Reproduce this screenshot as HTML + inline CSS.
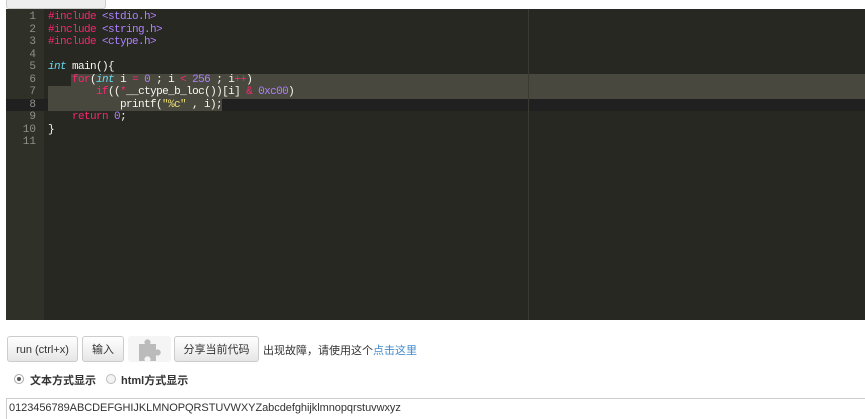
<!DOCTYPE html>
<html><head><meta charset="utf-8"><style>
body{margin:0;width:865px;height:416px;background:#fff;position:relative;overflow:hidden;font-family:"Liberation Sans","Noto Sans CJK SC",sans-serif}
.tab{position:absolute;left:6px;top:-4px;width:98px;height:11px;background:#eee;border:1px solid #ccc;border-radius:3px}
.ed{position:absolute;left:6px;top:9px;width:859px;height:311px;background:#272822;overflow:hidden}
.gut{position:absolute;left:0;top:0;width:38px;height:311px;background:#2f3129}
.ln{position:absolute;left:0;width:30px;text-align:right;color:#8f908a;font:11px/12.5px "Liberation Mono",monospace}
.cl{position:absolute;left:42px;white-space:pre;color:#f8f8f2;font:11px/12.5px "Liberation Mono",monospace;letter-spacing:-0.6px}
.sel{position:absolute;background:#49483e}
.pm{position:absolute;left:522px;top:0;width:1px;height:311px;background:#3b3a32}
.k{color:#f92672}.t{color:#66d9ef;font-style:italic}.n{color:#ae81ff}.s{color:#e6db74}
.btn{position:absolute;top:336px;height:26px;border:1px solid #ccc;border-radius:3px;background:linear-gradient(#fff,#e6e6e6);font-size:11px;line-height:26px;text-align:center;color:#333;box-sizing:border-box}
</style></head><body>
<div class="tab"></div>
<div class="ed">
<div class="gut"></div>
<div class="sel" style="left:0;top:89.5px;width:859px;height:12.5px;background:#202020"></div>
<div class="sel" style="left:65px;top:64.5px;width:794px;height:12.5px"></div>
<div class="sel" style="left:42px;top:77px;width:817px;height:12.5px"></div>
<div class="sel" style="left:42px;top:89.5px;width:174px;height:12.5px"></div>
<div class="pm"></div>
<div class="ln" style="top:2px">1<br>2<br>3<br>4<br>5<br>6<br>7<br>8<br>9<br>10<br>11</div>
<div class="cl" style="top:2px"><span class="k">#include</span> <span class="n">&lt;stdio.h&gt;</span>
<span class="k">#include</span> <span class="n">&lt;string.h&gt;</span>
<span class="k">#include</span> <span class="n">&lt;ctype.h&gt;</span>

<span class="t">int</span> main(){
    <span class="k">for</span>(<span class="t">int</span> i <span class="k">=</span> <span class="n">0</span> ; i <span class="k">&lt;</span> <span class="n">256</span> ; i<span class="k">++</span>)
        <span class="k">if</span>((<span class="k">*</span>__ctype_b_loc())[i] <span class="k">&amp;</span> <span class="n">0xc00</span>)
            printf(<span class="s">"%c"</span> , i);
    <span class="k">return</span> <span class="n">0</span>;
}
</div>
</div>
<div class="btn" style="left:7px;width:71px">run (ctrl+x)</div>
<div class="btn" style="left:82px;width:42px">输入</div>
<div style="position:absolute;left:128px;top:336px;width:43px;height:26px;background:#f5f5f5;border-radius:3px">
<svg width="43" height="26" viewBox="0 0 43 26"><path fill="#bbb" d="M11 8h6a3 3 0 1 1 5 0h6v6a3 3 0 1 1 0 5v6h-6a3 3 0 1 0-5 0h-6z"/></svg></div>
<div class="btn" style="left:174px;width:85px">分享当前代码</div>
<div style="position:absolute;left:263px;top:342px;font-size:11px;color:#333">出现故障，请使用这个<span style="color:#428bca">点击这里</span></div>
<div style="position:absolute;left:14px;top:374px;width:8px;height:8px;border:1px solid #aaa;border-radius:50%"><div style="margin:2px;width:4px;height:4px;border-radius:50%;background:#555"></div></div>
<div style="position:absolute;left:30px;top:372px;font-size:11px;font-weight:bold;color:#333">文本方式显示</div>
<div style="position:absolute;left:106px;top:374px;width:8px;height:8px;border:1px solid #bbb;border-radius:50%;background:#f3f3f3"></div>
<div style="position:absolute;left:121px;top:372px;font-size:11px;font-weight:bold;color:#333">html方式显示</div>
<div style="position:absolute;left:6px;top:398px;width:859px;height:20px;border-top:1px solid #ccc;border-left:1px solid #ccc;font-size:11px;line-height:19px;padding-left:2px;color:#333;letter-spacing:-0.05px">0123456789ABCDEFGHIJKLMNOPQRSTUVWXYZabcdefghijklmnopqrstuvwxyz</div>
</body></html>
